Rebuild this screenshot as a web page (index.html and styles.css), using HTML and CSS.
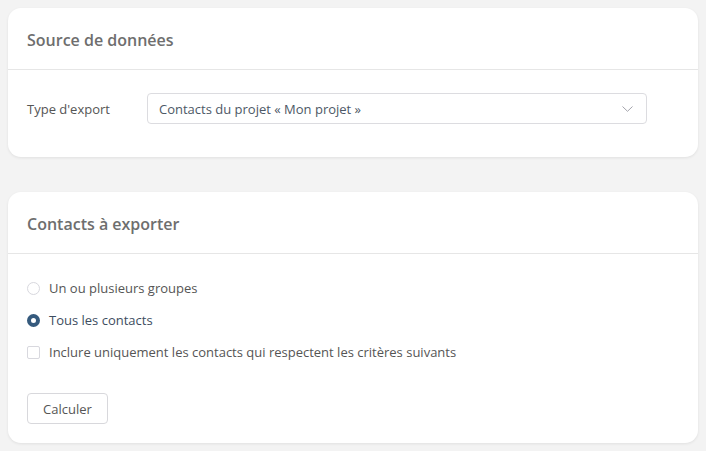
FILE: index.html
```html
<!DOCTYPE html>
<html lang="fr">
<head>
<meta charset="utf-8">
<link rel="stylesheet" href="styles.css">
</head>
<body>
<section class="card card-source">
  <header class="card-header"><h2 class="card-title">Source de données</h2></header>
  <div class="card-body body-source">
    <label class="field-label">Type d'export</label>
    <div class="select">
      <span class="select-value">Contacts du projet « Mon projet »</span>
      <svg class="chevron" width="11" height="6" viewBox="0 0 11 6"><path d="M0.5 0.5 L5.5 5.3 L10.5 0.5" fill="none" stroke="#a3a3ab" stroke-width="1"/></svg>
    </div>
  </div>
</section>
<section class="card card-contacts">
  <header class="card-header"><h2 class="card-title">Contacts à exporter</h2></header>
  <div class="card-body body-contacts">
    <div class="option"><span class="radio"></span><span class="opt-text">Un ou plusieurs groupes</span></div>
    <div class="option"><span class="radio checked"></span><span class="opt-text active">Tous les contacts</span></div>
    <div class="option"><span class="checkbox"></span><span class="opt-text">Inclure uniquement les contacts qui respectent les critères suivants</span></div>
    <button class="btn">Calculer</button>
  </div>
</section>
</body>
</html>
```
FILE: styles.css
```css
html, body { margin: 0; padding: 0; }
body {
  background: #f3f3f3;
  font-family: "Open Sans", "Liberation Sans", sans-serif;
  font-size: 13px;
  color: #555;
  padding: 8px;
}
.card {
  background: #fff;
  border-radius: 13px;
  box-shadow: 0 1px 3px rgba(0,0,0,0.08);
}
.card-contacts { margin-top: 35px; }
.card-header {
  height: 62px;
  border-bottom: 1px solid #e6e6e6;
  display: flex;
  align-items: center;
  padding: 2px 19px 0;
  box-sizing: border-box;
}
.card-title {
  margin: 0;
  font-size: 16px;
  font-weight: 600;
  color: #6e6e6e;
}
.card-body { padding: 0 19px; }
.body-source {
  display: flex;
  align-items: center;
  padding-top: 23px;
  padding-bottom: 33px;
}
.field-label { width: 120px; color: #555; }
.select {
  width: 500px;
  height: 31px;
  box-sizing: border-box;
  border: 1px solid #dcdce0;
  border-radius: 4px;
  display: flex;
  align-items: center;
  justify-content: space-between;
  padding: 0 13px 0 11px;
}
.select-value { color: #4d5866; }
.chevron { display: block; }
.body-contacts {
  padding-top: 18px;
  padding-bottom: 19px;
}
.option {
  display: flex;
  align-items: center;
  height: 32px;
}
.opt-text { color: #555; }
.opt-text.active { color: #3d4d60; }
.radio, .checkbox {
  width: 13px;
  height: 13px;
  box-sizing: border-box;
  border: 1px solid #d8d8de;
  margin-right: 9px;
  flex: none;
  background: #fff;
}
.radio { border-radius: 50%; }
.checkbox { border-radius: 2px; }
.radio.checked {
  border: 4px solid #355a7d;
  background: #fff;
}
.btn {
  display: block;
  margin-top: 25px;
  font-family: inherit;
  font-size: 13px;
  color: #555;
  background: #fff;
  border: 1px solid #d8d8dc;
  border-radius: 4px;
  height: 31px;
  padding: 0 15px;
}
```
